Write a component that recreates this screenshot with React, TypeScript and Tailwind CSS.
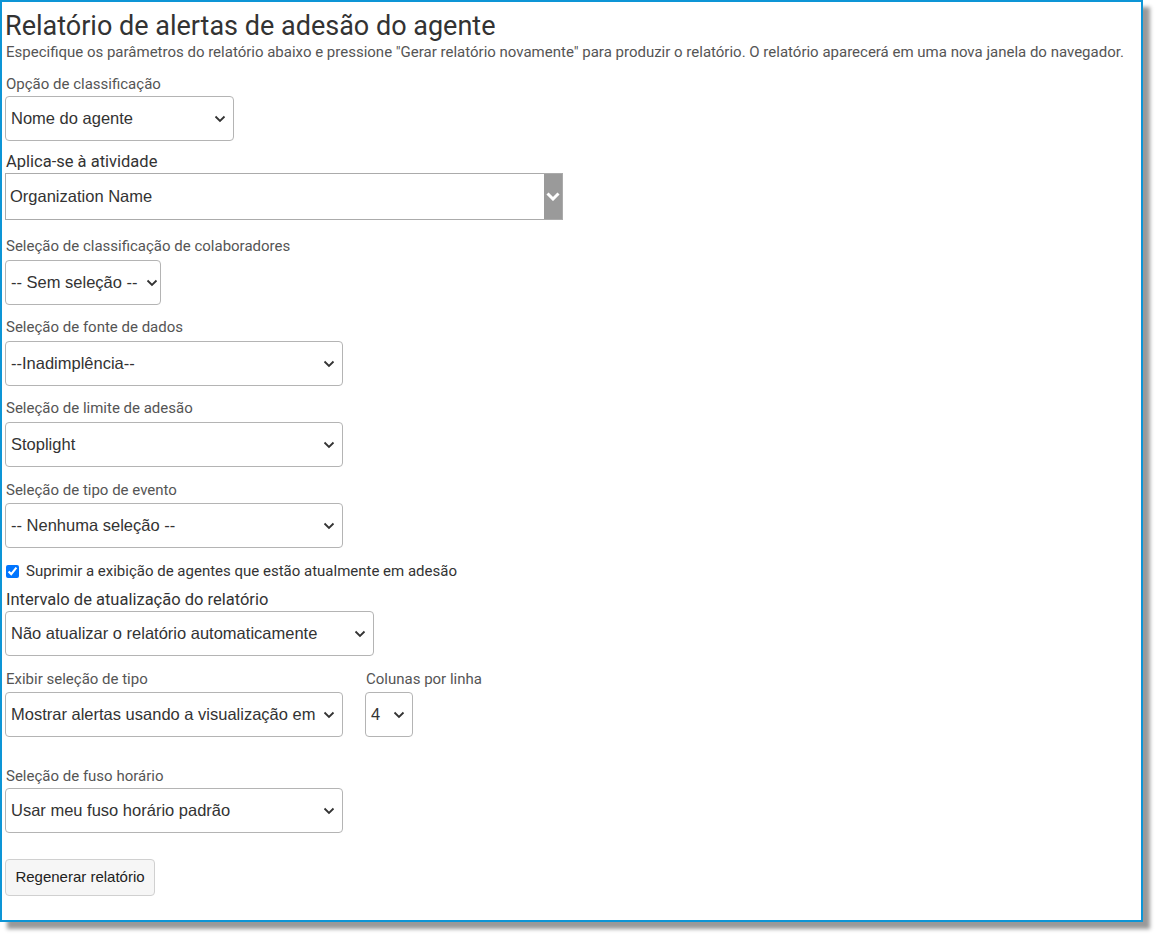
import React from "react";

const roboto = { fontFamily: "Roboto, 'Liberation Sans', sans-serif" };
const arial = { fontFamily: "'Liberation Sans', Arial, sans-serif" };

function Chevron({ className = "" }: { className?: string }) {
  return (
    <svg width="12" height="8" viewBox="0 0 12 8" className={className}>
      <path d="M1.5 1.5 L6 6 L10.5 1.5" fill="none" stroke="#333" strokeWidth="1.8" />
    </svg>
  );
}

function FakeSelect({ value, width, className = "" }: { value: string; width: string; className?: string }) {
  return (
    <div
      className={`flex h-[45px] items-center justify-between overflow-hidden rounded-[4px] border border-[#b4b4b4] bg-white pl-[5px] pr-[7px] text-[16.5px] text-[#333] ${width} ${className}`}
      style={arial}
    >
      <span className="whitespace-nowrap">{value}</span>
      <Chevron className="ml-2 shrink-0" />
    </div>
  );
}

function Label({ children, className = "" }: { children: React.ReactNode; className?: string }) {
  return (
    <div className={`h-[20px] whitespace-nowrap text-[15px] leading-[20px] text-[#555] ${className}`} style={roboto}>
      {children}
    </div>
  );
}

export default function App() {
  return (
    <div className="min-h-[936px] bg-white">
      <div className="h-[922px] w-[1143px] border-2 border-[#0d95d6] bg-white px-[3px] shadow-[7px_7px_4px_rgba(0,0,0,0.4)]">
        <h1 className="mt-[8px] h-[32px] text-[27px] leading-[32px] text-[#333]" style={roboto}>
          Relatório de alertas de adesão do agente
        </h1>
        <p className="ml-px h-[20px] whitespace-nowrap text-[15px] leading-[20px] text-[#555]" style={roboto}>
          Especifique os parâmetros do relatório abaixo e pressione "Gerar relatório novamente" para produzir o relatório. O relatório aparecerá em uma nova janela do navegador.
        </p>

        <Label className="ml-px mt-[12px]">Opção de classificação</Label>
        <FakeSelect value="Nome do agente" width="w-[229px]" className="mt-[2px]" />

        <div className="ml-px mt-[10px] h-[22px] text-[16.5px] leading-[22px] text-[#333]" style={roboto}>
          Aplica-se à atividade
        </div>
        <div className="flex h-[47px] w-[558px] items-stretch border border-[#ababab] bg-white" style={arial}>
          <div className="flex flex-1 items-center pl-[4px] text-[16.5px] text-[#333]">Organization Name</div>
          <div className="flex w-[18px] items-center justify-center bg-[#9a9a9a]">
            <svg width="14" height="9" viewBox="0 0 14 9">
              <path d="M1.5 1.5 L7 7 L12.5 1.5" fill="none" stroke="#fff" strokeWidth="3" />
            </svg>
          </div>
        </div>

        <Label className="ml-px mt-[16px]">Seleção de classificação de colaboradores</Label>
        <FakeSelect value="-- Sem seleção --" width="w-[156px]" className="mt-[4px]" />

        <Label className="ml-px mt-[12px]">Seleção de fonte de dados</Label>
        <FakeSelect value="--Inadimplência--" width="w-[338px]" className="mt-[4px]" />

        <Label className="ml-px mt-[12px]">Seleção de limite de adesão</Label>
        <FakeSelect value="Stoplight" width="w-[338px]" className="mt-[4px]" />

        <Label className="ml-px mt-[13px]">Seleção de tipo de evento</Label>
        <FakeSelect value="-- Nenhuma seleção --" width="w-[338px]" className="mt-[3px]" />

        <div className="ml-px mt-[13px] flex h-[20px] items-center gap-[7px]" style={roboto}>
          <input type="checkbox" defaultChecked className="m-0 h-[13px] w-[13px] accent-[#0075ff]" />
          <span className="text-[15px] text-[#333]">Suprimir a exibição de agentes que estão atualmente em adesão</span>
        </div>

        <div className="ml-px mt-[8px] h-[22px] text-[16.5px] leading-[22px] text-[#333]" style={roboto}>
          Intervalo de atualização do relatório
        </div>
        <FakeSelect value="Não atualizar o relatório automaticamente" width="w-[369px]" />

        <div className="mt-[13px] flex gap-[22px]">
          <div>
            <Label className="ml-px">Exibir seleção de tipo</Label>
            <FakeSelect value="Mostrar alertas usando a visualização em" width="w-[338px]" className="mt-[3px]" />
          </div>
          <div>
            <Label className="ml-px">Colunas por linha</Label>
            <FakeSelect value="4" width="w-[48px]" className="mt-[3px]" />
          </div>
        </div>

        <Label className="ml-px mt-[29px]">Seleção de fuso horário</Label>
        <FakeSelect value="Usar meu fuso horário padrão" width="w-[338px]" className="mt-[2px]" />

        <button
          className="mt-[26px] h-[37px] w-[150px] rounded-[4px] border border-[#d0d0d0] bg-[#f6f6f6] text-[15px] text-[#222]"
          style={arial}
        >
          Regenerar relatório
        </button>
      </div>
    </div>
  );
}
